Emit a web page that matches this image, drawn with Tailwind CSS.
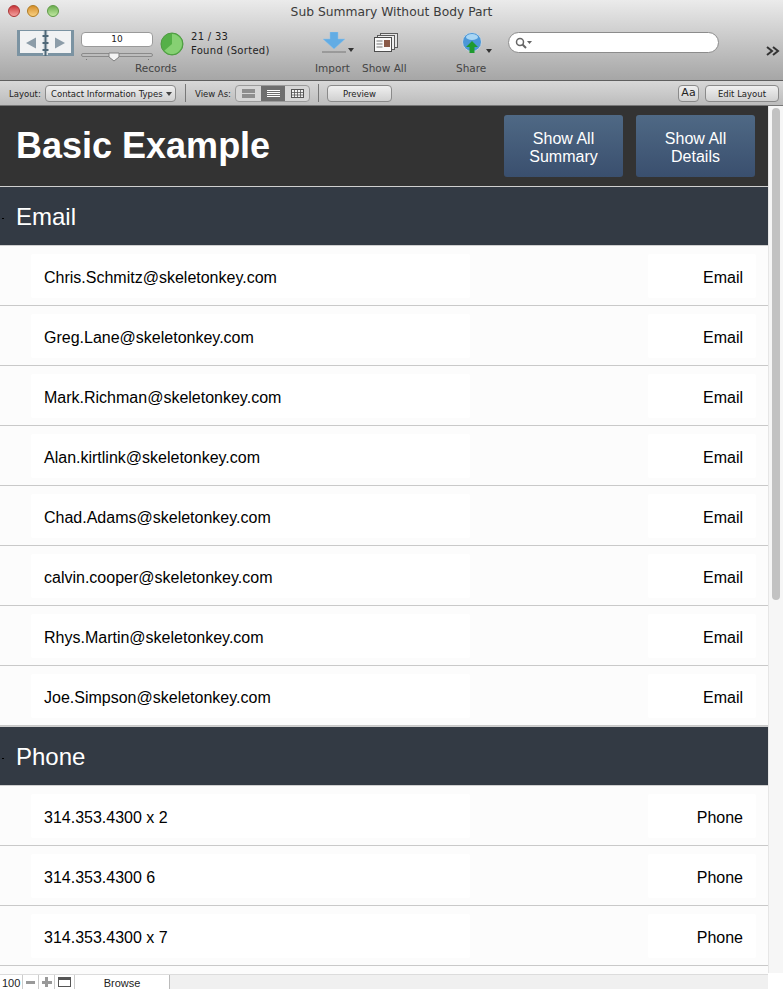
<!DOCTYPE html>
<html lang="en">
<head>
  <meta charset="UTF-8" />
  <title>Sub Summary Without Body Part</title>
  <script src="https://cdn.jsdelivr.net/npm/@tailwindcss/browser@4"></script>
</head>
<body class="w-[783px] h-[989px] overflow-hidden bg-white font-['Liberation_Sans',sans-serif]">

  <!-- Title bar and toolbar -->
  <header class="h-[81px] border-b border-[#5f5f5f] bg-gradient-to-b from-[#ebebeb] to-[#a6a6a6] font-['DejaVu_Sans',sans-serif] text-[#333]">
    <div class="relative h-[23px] pt-[2px] flex items-center justify-center text-[12.300px] text-[#3c3c3c]">
      <div class="absolute left-[8px] top-[5px] flex gap-[7px]">
        <span class="size-[12px] rounded-full border border-[#a33] bg-gradient-to-b from-[#c8323a] to-[#f4a0a0]"></span>
        <span class="size-[12px] rounded-full border border-[#b07a20] bg-gradient-to-b from-[#d68f25] to-[#f8d080]"></span>
        <span class="ml-px size-[12px] rounded-full border border-[#5c9a45] bg-gradient-to-b from-[#6dae50] to-[#bfe8a0]"></span>
      </div>
      Sub Summary Without Body Part
    </div>

    <div class="flex items-start h-[57px] pl-[17px]">
      <!-- Book -->
      <svg class="mt-[7px] shrink-0" width="57" height="27" viewBox="0 0 57 27">
        <rect x="0" y="0" width="57" height="26" fill="#7b93a2" />
        <rect x="3" y="1" width="23" height="22" fill="#f1f2f3" />
        <rect x="31" y="1" width="23" height="22" fill="#f1f2f3" />
        <rect x="26" y="1" width="5" height="24" fill="#dfe3e6" />
        <path d="M28.500 0v26" stroke="#4f6878" stroke-width="2" />
        <path d="M25.500 6h6M25.500 13h6M25.500 20h6" stroke="#4f6878" stroke-width="2" fill="none" />
        <path d="M9 13 19 7.500v11z" fill="#8c9ca8" />
        <path d="M48 13 38 7.500v11z" fill="#8c9ca8" />
      </svg>

      <!-- Records -->
      <div class="ml-[7px] w-[72px] shrink-0 pt-[9px]">
        <div class="h-[15px] rounded-[4px] border border-[#9a9a9a] bg-white text-center text-[9px] leading-[13px] text-[#222]">10</div>
        <div class="relative mt-[6px] h-[4px] rounded-full border border-[#8a8a8a] bg-[#bdbdbd]">
          <svg class="absolute left-[26px] -top-[2px]" width="12" height="10" viewBox="0 0 12 10"><path d="M1 1h10v4L6 9 1 5z" fill="#f4f4f4" stroke="#808080" /></svg>
          <span class="absolute left-[4px] top-[5px] size-px bg-[#777]"></span>
          <span class="absolute left-[66px] top-[5px] size-px bg-[#777]"></span>
        </div>
      </div>

      <div class="ml-[7px] mt-[9px] shrink-0 flex items-start">
        <svg width="24" height="24" viewBox="0 0 24 24">
          <circle cx="12" cy="12" r="11" fill="#55b048" stroke="#4f9a42" />
          <path d="M12 2a10 10 0 1 1-7.500 16.600L12 12z" fill="#86d073" />
        </svg>
        <div class="-mt-[2px] ml-[7px] text-[10px] leading-[14px] tracking-[0.300px] text-[#1f1f1f]">
          <div>21 / 33</div>
          <div>Found (Sorted)</div>
        </div>
      </div>

      <!-- Import -->
      <svg class="ml-[52px] mt-[9px] shrink-0" width="32" height="22" viewBox="0 0 32 22">
        <path d="M8 0h8v7h7L12 17 1 7h7z" fill="#62ace4" stroke="#8cc2ea" stroke-width="0.500" />
        <path d="M0 20h24" stroke="#777" />
        <path d="M26 16h6l-3 4z" fill="#333" />
      </svg>

      <!-- Show All -->
      <svg class="ml-[20px] mt-[10px] shrink-0" width="25" height="20" viewBox="0 0 25 20">
        <rect x="6.500" y="0.500" width="17" height="14" fill="#e4e4e4" stroke="#5b5b5b" />
        <rect x="3.500" y="2.500" width="17" height="14" fill="#eee" stroke="#5b5b5b" />
        <rect x="0.500" y="4.500" width="17" height="14" fill="#fafafa" stroke="#4d4d4d" />
        <path d="M2.500 8h6M2.500 11h6M2.500 14h6" stroke="#777" />
        <rect x="10" y="7" width="6" height="7" fill="#8a5a48" />
      </svg>

      <!-- Share -->
      <svg class="ml-[63px] mt-[9px] shrink-0" width="30" height="24" viewBox="0 0 30 24">
        <circle cx="10" cy="10" r="9.500" fill="#4b97d8" stroke="#c9d4dc" />
        <ellipse cx="10" cy="5" rx="6" ry="3" fill="#a9d6f4" />
        <path d="M10 9l6 6h-3.500v6h-5v-6H4z" fill="#1f9a2f" />
        <path d="M24 17h6l-3 4z" fill="#333" />
      </svg>

      <!-- Search -->
      <div class="ml-[16px] mt-[9px] w-[211px] h-[21px] shrink-0 rounded-full border border-[#8c8c8c] bg-white flex items-center pl-[6px]">
        <svg width="18" height="12" viewBox="0 0 18 12">
          <circle cx="5" cy="5" r="3.500" fill="none" stroke="#666" stroke-width="1.500" />
          <path d="M7.500 7.500 11 11" stroke="#666" stroke-width="2" />
          <path d="M12 4h5l-2.500 3z" fill="#666" />
        </svg>
      </div>

      <svg class="ml-[47px] mt-[23px] shrink-0" width="14" height="10" viewBox="0 0 14 10">
        <path d="M1 1l5 4-5 4M7 1l5 4-5 4" fill="none" stroke="#333" stroke-width="2" />
      </svg>
    </div>

    <!-- Toolbar labels -->
    <div class="relative -mt-[19px] h-[14px] text-[10.500px] leading-[14px] text-[#444]">
      <span class="absolute left-[135px]">Records</span>
      <span class="absolute left-[315px]">Import</span>
      <span class="absolute left-[362px]">Show All</span>
      <span class="absolute left-[456px]">Share</span>
    </div>
  </header>

  <!-- Layout bar -->
  <div class="h-[25px] flex items-center pl-[9px] bg-gradient-to-b from-[#d8d8d8] to-[#bcbcbc] border-b border-[#777] font-['DejaVu_Sans',sans-serif] text-[8.500px] text-[#222]">
    <span class="w-[36px] pt-[2px]">Layout:</span>
    <div class="w-[131px] h-[17px] pt-[2px] rounded-[4px] border border-[#8a8a8a] bg-gradient-to-b from-[#f0f0f0] to-[#d0d0d0] flex items-center justify-between pl-[5px] pr-[3px]">
      <span>Contact Information Types</span>
      <span class="border-x-[3px] border-t-[4px] border-x-transparent border-t-[#444]"></span>
    </div>
    <span class="ml-[9px] w-px h-[18px] bg-[#777]"></span>
    <span class="ml-[9px] w-[40px] pt-[2px]">View As:</span>
    <div class="w-[75px] h-[17px] rounded-[4px] border border-[#9a9a9a] bg-[#d6d6d6] flex overflow-hidden">
      <div class="w-[25px] flex flex-col items-center justify-center gap-px">
        <span class="w-[13px] h-[4px] bg-[#8e8e8e]"></span>
        <span class="w-[13px] h-[4px] bg-[#8e8e8e]"></span>
      </div>
      <div class="w-[24px] bg-[#6e6e6e] flex flex-col items-center justify-center gap-px">
        <span class="w-[13px] h-px bg-white"></span>
        <span class="w-[13px] h-px bg-white"></span>
        <span class="w-[13px] h-px bg-white"></span>
        <span class="w-[13px] h-px bg-white"></span>
      </div>
      <div class="flex-1 flex items-center justify-center">
        <svg width="13" height="9" viewBox="0 0 13 9"><rect x="0.500" y="0.500" width="12" height="8" fill="#f2f2f2" stroke="#555" /><path d="M0 3.500h13M0 6h13M3.500 0v9M6.500 0v9M9.500 0v9" stroke="#555" stroke-width="0.800" /></svg>
      </div>
    </div>
    <span class="ml-[8px] w-px h-[18px] bg-[#777]"></span>
    <div class="ml-[8px] w-[65px] h-[17px] pt-[2px] rounded-[4px] border border-[#8a8a8a] bg-gradient-to-b from-[#f0f0f0] to-[#d0d0d0] flex items-center justify-center">Preview</div>
    <div class="ml-auto w-[21px] h-[17px] rounded-[4px] border border-[#8a8a8a] bg-gradient-to-b from-[#f0f0f0] to-[#d0d0d0] flex items-center justify-center text-[11px]">Aa</div>
    <div class="ml-[6px] mr-[4px] w-[74px] h-[17px] pt-[2px] rounded-[4px] border border-[#8a8a8a] bg-gradient-to-b from-[#f0f0f0] to-[#d0d0d0] flex items-center justify-center">Edit Layout</div>
  </div>

  <div class="flex h-[883px]">
    <main class="w-[768px] shrink-0 flex flex-col">
      <div class="h-[81px] shrink-0 bg-[#333] border-b border-[#cfcfcf] flex items-start pl-[16px] pt-[9px]">
        <h1 class="mt-[10px] text-[36px] leading-[42px] font-bold text-white">Basic Example</h1>
        <button class="ml-auto w-[119px] h-[62px] pt-[4px] rounded-[3px] bg-gradient-to-b from-[#4f6985] to-[#3a4f6e] text-white text-[16px] leading-[18px]">Show All<br>Summary</button>
        <button class="ml-[13px] mr-[13px] w-[119px] h-[62px] pt-[4px] rounded-[3px] bg-gradient-to-b from-[#4f6985] to-[#3a4f6e] text-white text-[16px] leading-[18px]">Show All<br>Details</button>
      </div>

      <div class="relative h-[59px] shrink-0 pt-[2px] bg-[#333a44] border-b border-[#cfcfcf] flex items-center pl-[16px] text-white text-[24px]">
        <span class="absolute left-[2px] top-[31px] w-[2px] h-px bg-black"></span>Email
      </div>

      <div class="h-[60px] shrink-0 bg-[#fcfcfc] border-b border-[#c9c9c9] flex pt-[8px] pl-[31px]"><div class="w-[439px] h-[44px] pt-[4px] rounded-[2px] bg-white flex items-center pl-[13px] text-[16px] text-black">Chris.Schmitz@skeletonkey.com</div><div class="ml-[178px] w-[108px] h-[44px] pt-[4px] rounded-[2px] bg-white flex items-center justify-end pr-[13px] text-[16px] text-black">Email</div></div>
      <div class="h-[60px] shrink-0 bg-[#fcfcfc] border-b border-[#c9c9c9] flex pt-[8px] pl-[31px]"><div class="w-[439px] h-[44px] pt-[4px] rounded-[2px] bg-white flex items-center pl-[13px] text-[16px] text-black">Greg.Lane@skeletonkey.com</div><div class="ml-[178px] w-[108px] h-[44px] pt-[4px] rounded-[2px] bg-white flex items-center justify-end pr-[13px] text-[16px] text-black">Email</div></div>
      <div class="h-[60px] shrink-0 bg-[#fcfcfc] border-b border-[#c9c9c9] flex pt-[8px] pl-[31px]"><div class="w-[439px] h-[44px] pt-[4px] rounded-[2px] bg-white flex items-center pl-[13px] text-[16px] text-black">Mark.Richman@skeletonkey.com</div><div class="ml-[178px] w-[108px] h-[44px] pt-[4px] rounded-[2px] bg-white flex items-center justify-end pr-[13px] text-[16px] text-black">Email</div></div>
      <div class="h-[60px] shrink-0 bg-[#fcfcfc] border-b border-[#c9c9c9] flex pt-[8px] pl-[31px]"><div class="w-[439px] h-[44px] pt-[4px] rounded-[2px] bg-white flex items-center pl-[13px] text-[16px] text-black">Alan.kirtlink@skeletonkey.com</div><div class="ml-[178px] w-[108px] h-[44px] pt-[4px] rounded-[2px] bg-white flex items-center justify-end pr-[13px] text-[16px] text-black">Email</div></div>
      <div class="h-[60px] shrink-0 bg-[#fcfcfc] border-b border-[#c9c9c9] flex pt-[8px] pl-[31px]"><div class="w-[439px] h-[44px] pt-[4px] rounded-[2px] bg-white flex items-center pl-[13px] text-[16px] text-black">Chad.Adams@skeletonkey.com</div><div class="ml-[178px] w-[108px] h-[44px] pt-[4px] rounded-[2px] bg-white flex items-center justify-end pr-[13px] text-[16px] text-black">Email</div></div>
      <div class="h-[60px] shrink-0 bg-[#fcfcfc] border-b border-[#c9c9c9] flex pt-[8px] pl-[31px]"><div class="w-[439px] h-[44px] pt-[4px] rounded-[2px] bg-white flex items-center pl-[13px] text-[16px] text-black">calvin.cooper@skeletonkey.com</div><div class="ml-[178px] w-[108px] h-[44px] pt-[4px] rounded-[2px] bg-white flex items-center justify-end pr-[13px] text-[16px] text-black">Email</div></div>
      <div class="h-[60px] shrink-0 bg-[#fcfcfc] border-b border-[#c9c9c9] flex pt-[8px] pl-[31px]"><div class="w-[439px] h-[44px] pt-[4px] rounded-[2px] bg-white flex items-center pl-[13px] text-[16px] text-black">Rhys.Martin@skeletonkey.com</div><div class="ml-[178px] w-[108px] h-[44px] pt-[4px] rounded-[2px] bg-white flex items-center justify-end pr-[13px] text-[16px] text-black">Email</div></div>
      <div class="h-[60px] shrink-0 bg-[#fcfcfc] border-b border-[#c9c9c9] flex pt-[8px] pl-[31px]"><div class="w-[439px] h-[44px] pt-[4px] rounded-[2px] bg-white flex items-center pl-[13px] text-[16px] text-black">Joe.Simpson@skeletonkey.com</div><div class="ml-[178px] w-[108px] h-[44px] pt-[4px] rounded-[2px] bg-white flex items-center justify-end pr-[13px] text-[16px] text-black">Email</div></div>

      <div class="relative h-[60px] shrink-0 pt-[2px] bg-[#333a44] border-t border-b border-[#cfcfcf] flex items-center pl-[16px] text-white text-[24px]">
        <span class="absolute left-[2px] top-[31px] w-[2px] h-px bg-black"></span>Phone
      </div>

      <div class="h-[60px] shrink-0 bg-[#fcfcfc] border-b border-[#c9c9c9] flex pt-[8px] pl-[31px]"><div class="w-[439px] h-[44px] pt-[4px] rounded-[2px] bg-white flex items-center pl-[13px] text-[16px] text-black">314.353.4300 x 2</div><div class="ml-[178px] w-[108px] h-[44px] pt-[4px] rounded-[2px] bg-white flex items-center justify-end pr-[13px] text-[16px] text-black">Phone</div></div>
      <div class="h-[60px] shrink-0 bg-[#fcfcfc] border-b border-[#c9c9c9] flex pt-[8px] pl-[31px]"><div class="w-[439px] h-[44px] pt-[4px] rounded-[2px] bg-white flex items-center pl-[13px] text-[16px] text-black">314.353.4300 6</div><div class="ml-[178px] w-[108px] h-[44px] pt-[4px] rounded-[2px] bg-white flex items-center justify-end pr-[13px] text-[16px] text-black">Phone</div></div>
      <div class="h-[60px] shrink-0 bg-[#fcfcfc] border-b border-[#c9c9c9] flex pt-[8px] pl-[31px]"><div class="w-[439px] h-[44px] pt-[4px] rounded-[2px] bg-white flex items-center pl-[13px] text-[16px] text-black">314.353.4300 x 7</div><div class="ml-[178px] w-[108px] h-[44px] pt-[4px] rounded-[2px] bg-white flex items-center justify-end pr-[13px] text-[16px] text-black">Phone</div></div>

      <div class="flex-1 bg-[#fcfcfc]"></div>

      <!-- Status bar -->
      <footer class="h-[15px] shrink-0 bg-[#f0f0f0] border-t border-[#dcdcdc] flex items-stretch text-[11px] leading-[16px] text-[#222]">
        <div class="w-[23px] pl-[2px] bg-white border-r border-[#ccc]">100</div>
        <div class="w-[16px] bg-white border-r border-[#ccc] flex items-center justify-center"><span class="w-[9px] h-[3px] bg-[#999]"></span></div>
        <div class="relative w-[16px] bg-white border-r border-[#ccc] flex items-center justify-center"><span class="w-[10px] h-[3px] bg-[#999]"></span><span class="absolute w-[3px] h-[10px] bg-[#999]"></span></div>
        <div class="w-[20px] bg-white border-r border-[#ccc] flex items-center justify-center"><span class="w-[13px] h-[10px] border border-[#555] border-t-[3px]"></span></div>
        <div class="w-[95px] bg-white border-r border-[#bbb] text-center">Browse</div>
      </footer>
    </main>

    <!-- Scrollbar -->
    <div class="w-[15px] h-[867px] shrink-0 bg-[#f6f6f6] border-l border-[#e6e6e6] pl-[3px] pt-[2px]">
      <div class="w-[8px] h-[492px] rounded-full bg-[#c2c2c2]"></div>
    </div>
  </div>
</body>
</html>
